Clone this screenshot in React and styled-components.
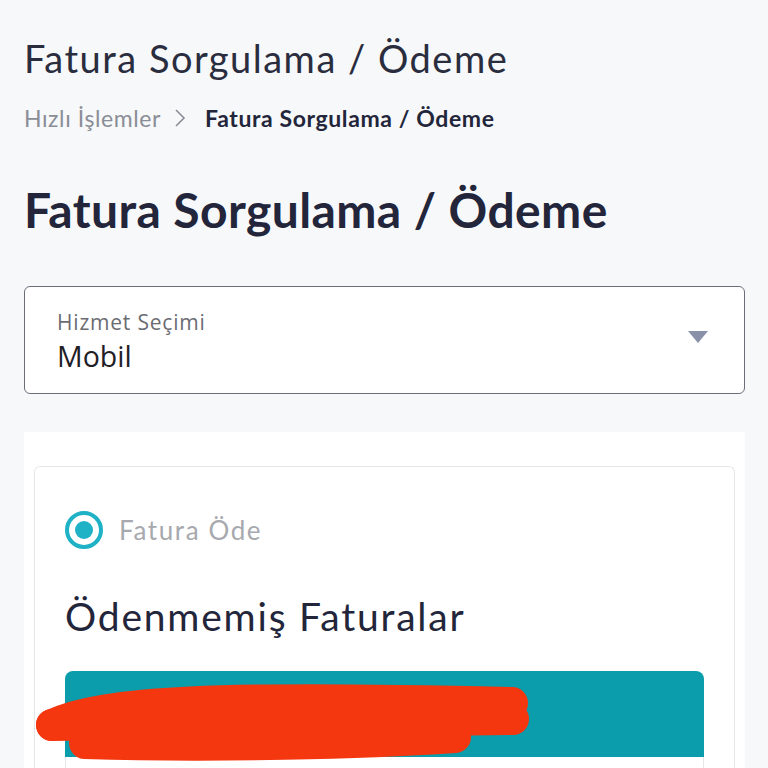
import React from "react";
import styled, { createGlobalStyle } from "styled-components";

const GlobalStyle = createGlobalStyle`
  html, body {
    margin: 0;
    padding: 0;
    background: #f7f8fa;
  }
  body {
    font-family: "Lato", "Noto Sans", sans-serif;
    color: #23263b;
  }
`;

const Page = styled.div`
  padding: 30px 23px 0 24px;
  height: 768px;
  box-sizing: border-box;
  overflow: hidden;
`;

const PageHeading = styled.h2`
  margin: 0;
  font-size: 38px;
  font-weight: 400;
  letter-spacing: 1.5px;
  line-height: 56px;
  color: #2a2d3e;
`;

const Breadcrumb = styled.nav`
  display: flex;
  align-items: center;
  margin-top: 16px;
  font-size: 23px;
  letter-spacing: 0.6px;
  line-height: 32px;
`;

const Crumb = styled.span`
  color: ${(p) => (p.current ? "#23263b" : "#8a8d96")};
  font-weight: ${(p) => (p.current ? 700 : 400)};
`;

const Chevron = styled.svg`
  width: 14px;
  height: 20px;
  margin: 0 18px 0 12px;
`;

const Title = styled.h1`
  margin: 46px 0 0;
  font-size: 48px;
  font-weight: 700;
  letter-spacing: 0.4px;
  line-height: 60px;
  color: #23263b;
`;

const Select = styled.div`
  margin-top: 46px;
  height: 108px;
  box-sizing: border-box;
  border: 1.5px solid #6b6e78;
  border-radius: 6px;
  background: #fff;
  display: flex;
  align-items: center;
  justify-content: space-between;
  padding: 4px 36px 0 32px;
  font-family: "Open Sans", "Noto Sans", sans-serif;
`;

const SelectText = styled.div`
  display: flex;
  flex-direction: column;
`;

const SelectLabel = styled.span`
  font-size: 21px;
  letter-spacing: 0.8px;
  line-height: 28px;
  color: #6a6c72;
`;

const SelectValue = styled.span`
  font-size: 28.5px;
  line-height: 40px;
  color: #1f2026;
`;

const Caret = styled.svg`
  width: 20px;
  height: 12px;
  margin-bottom: 10px;
`;

const Panel = styled.section`
  margin-top: 38px;
  background: #fff;
  padding: 34px 10px 0;
`;

const InnerCard = styled.div`
  border: 1px solid #e6e7ea;
  border-bottom: none;
  border-radius: 6px 6px 0 0;
  padding: 44px 30px 0;
`;

const RadioRow = styled.label`
  display: flex;
  align-items: center;
  gap: 16px;
`;

const Radio = styled.span`
  width: 38px;
  height: 38px;
  box-sizing: border-box;
  border: 4px solid #1fb1c6;
  border-radius: 50%;
  display: flex;
  align-items: center;
  justify-content: center;
  &::after {
    content: "";
    width: 18px;
    height: 18px;
    border-radius: 50%;
    background: #1fb1c6;
  }
`;

const RadioText = styled.span`
  font-size: 26px;
  letter-spacing: 1.6px;
  color: #a7a9ae;
`;

const SectionTitle = styled.h3`
  margin: 42px 0 0;
  font-size: 39px;
  font-weight: 400;
  letter-spacing: 1.8px;
  line-height: 50px;
  color: #23263b;
`;

const InvoiceCard = styled.div`
  margin-top: 30px;
`;

const InvoiceHeader = styled.div`
  position: relative;
  height: 86px;
  background: #0b9dab;
  border-radius: 8px 8px 0 0;
`;

const Redaction = styled.svg`
  position: absolute;
  left: 0;
  top: 0;
  overflow: visible;
`;

const InvoiceBody = styled.div`
  height: 40px;
  background: #fff;
  border: 1px solid #e6e7ea;
  border-top: none;
`;

export default function App() {
  return (
    <>
      <GlobalStyle />
      <Page>
        <PageHeading>Fatura Sorgulama / Ödeme</PageHeading>
        <Breadcrumb>
          <Crumb>Hızlı İşlemler</Crumb>
          <Chevron viewBox="0 0 14 20">
            <path d="M3 2 L11 10 L3 18" fill="none" stroke="#8a8d96" strokeWidth="1.6" />
          </Chevron>
          <Crumb current>Fatura Sorgulama / Ödeme</Crumb>
        </Breadcrumb>
        <Title>Fatura Sorgulama / Ödeme</Title>
        <Select>
          <SelectText>
            <SelectLabel>Hizmet Seçimi</SelectLabel>
            <SelectValue>Mobil</SelectValue>
          </SelectText>
          <Caret viewBox="0 0 20 12">
            <path d="M0 0 H20 L10 12 Z" fill="#8891a8" />
          </Caret>
        </Select>
        <Panel>
          <InnerCard>
            <RadioRow>
              <Radio />
              <RadioText>Fatura Öde</RadioText>
            </RadioRow>
            <SectionTitle>Ödenmemiş Faturalar</SectionTitle>
            <InvoiceCard>
              <InvoiceHeader>
                <Redaction width="639" height="86">
                  <g fill="none" stroke="#f5370f" strokeWidth="32" strokeLinecap="round">
                    <path d="M -13 54 C 40 30, 150 25, 447 32" />
                    <path d="M -13 54 L 448 48" />
                    <path d="M 20 72 C 150 76, 300 72, 390 66" />
                  </g>
                </Redaction>
              </InvoiceHeader>
              <InvoiceBody />
            </InvoiceCard>
          </InnerCard>
        </Panel>
      </Page>
    </>
  );
}
